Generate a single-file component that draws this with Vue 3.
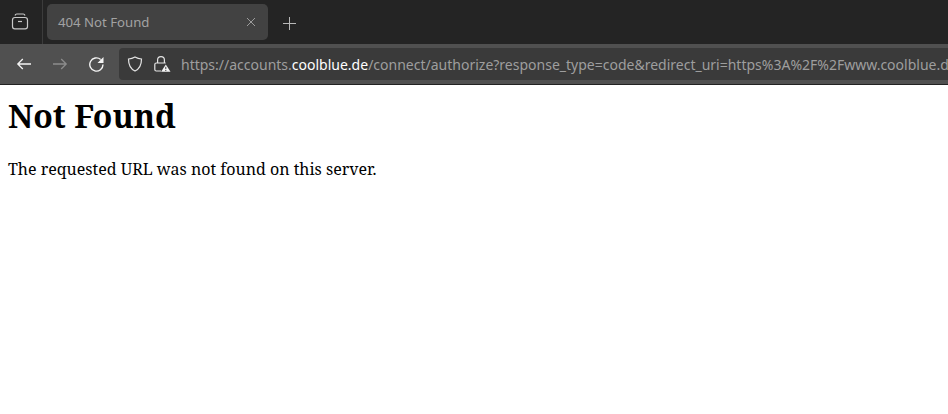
<script setup>
const url = {
  scheme: 'https://accounts.',
  host: 'coolblue.de',
  rest: '/connect/authorize?response_type=code&redirect_uri=https%3A%2F%2Fwww.coolblue.de%2Fauth%2Fcallback'
}
</script>

<template>
  <div class="page">
    <div class="tabbar">
      <div class="tab-manager">
        <svg width="18" height="18" viewBox="0 0 18 18" fill="none" stroke="#c8c8c8" stroke-width="1.200">
          <path d="M4 2.500c.3-1 .8-1.500 1.800-1.500h6.400c1 0 1.500.5 1.800 1.500" />
          <path d="M1.500 7c0-1.700.8-2.500 2.500-2.500h10c1.700 0 2.500.8 2.500 2.500v6.500c0 1.500-.7 2.300-2.300 2.300H3.800c-1.600 0-2.300-.8-2.300-2.300z" />
          <path d="M7 8.500h4" />
        </svg>
      </div>
      <div class="tab">
        <span class="tab-title">404 Not Found</span>
        <svg class="tab-close" width="10" height="10" viewBox="0 0 10 10" stroke="#9c9c9c" stroke-width="1">
          <path d="M1 1l8 8M9 1l-8 8" />
        </svg>
      </div>
      <svg class="new-tab" width="13" height="13" viewBox="0 0 13 13" stroke="#b8b8b8" stroke-width="1">
        <path d="M6.500 0v13M0 6.500h13" />
      </svg>
    </div>

    <div class="toolbar">
      <div class="nav">
        <svg width="16" height="14" viewBox="0 0 16 14" fill="none" stroke="#f4f4f4" stroke-width="1.300">
          <path d="M15 7H1.800M6.800 2L1.800 7l5 5" />
        </svg>
        <svg width="16" height="14" viewBox="0 0 16 14" fill="none" stroke="#8c8c8c" stroke-width="1.300">
          <path d="M1 7h13.200M9.200 2l5 5-5 5" />
        </svg>
        <svg width="16" height="16" viewBox="0 0 16 16" fill="none">
          <path d="M12.700 3.500A6.600 6.600 0 1 0 15 8.500" stroke="#f4f4f4" stroke-width="1.400" />
          <path d="M15.500 1v6H9.500z" fill="#f4f4f4" />
        </svg>
      </div>
      <div class="urlbar">
        <svg class="url-icon" width="16" height="16" viewBox="0 0 16 16" fill="none" stroke="#e4e4e4" stroke-width="1.200">
          <path d="M8 1c2.200 1.300 4.400 1.900 6.500 2 0 5.500-1.700 9.800-6.500 12C3.200 12.800 1.500 8.500 1.500 3 3.600 2.900 5.800 2.300 8 1z" />
        </svg>
        <svg class="url-icon lock" width="17" height="16" viewBox="0 0 17 16" fill="none">
          <path d="M3.600 7V4a3.400 3.400 0 0 1 6.800 0v3" stroke="#e4e4e4" stroke-width="1.200" />
          <path d="M7 15H2.300C1.300 15 .8 14.500 .8 13.500V8.500C.8 7.500 1.300 7 2.300 7h9.400" stroke="#e4e4e4" stroke-width="1.200" />
          <path d="M11.800 8.500L16.500 15.800H7.100z" fill="#f4f4f4" />
          <path d="M11.800 10.800v2.400M11.800 14v1" stroke="#3a3a3a" stroke-width="1" />
        </svg>
        <div class="url"><span>{{ url.scheme }}</span><span class="host">{{ url.host }}</span><span>{{ url.rest }}</span></div>
      </div>
    </div>

    <main class="content">
      <h1>Not Found</h1>
      <p>The requested URL was not found on this server.</p>
    </main>
  </div>
</template>

<style scoped>
.page {
  width: 948px;
  height: 414px;
  overflow: hidden;
  background: #fff;
}
.tabbar {
  height: 44px;
  display: flex;
  align-items: center;
  background: #242424;
  font-family: "Noto Sans", sans-serif;
}
.tab-manager {
  width: 40px;
  height: 44px;
  padding-right: 2px;
  display: flex;
  align-items: center;
  justify-content: center;
  border-right: 1px solid #3c3c3c;
}
.tab {
  width: 221px;
  height: 36px;
  margin-left: 4px;
  padding: 0 12px 0 11px;
  box-sizing: border-box;
  display: flex;
  align-items: center;
  justify-content: space-between;
  background: #424242;
  border-radius: 5px;
}
.tab-title {
  font-size: 13.2px;
  color: #a2a2a2;
}
.new-tab {
  margin: 2px 0 0 15px;
}
.toolbar {
  height: 40px;
  display: flex;
  align-items: center;
  background: #505050;
  border-bottom: 1px solid #222;
}
.nav {
  width: 119px;
  flex: none;
  padding-left: 16px;
  box-sizing: border-box;
  display: flex;
  align-items: center;
  gap: 20px;
}
.urlbar {
  flex: 1;
  min-width: 0;
  height: 32px;
  padding-left: 8px;
  display: flex;
  align-items: center;
  background: #3a3a3a;
  border-radius: 4px 0 0 4px;
}
.url-icon {
  flex: none;
}
.lock {
  margin-left: 11px;
}
.url {
  flex: 1;
  min-width: 0;
  margin-left: 10px;
  font-family: "Noto Sans", sans-serif;
  font-size: 14px;
  white-space: nowrap;
  overflow: hidden;
  color: #9e9e9e;
}
.host {
  color: #fff;
}
.content {
  padding: 0 8px;
  font-family: "Noto Serif", "DejaVu Serif", serif;
  color: #000;
}
h1 {
  margin: 11px 0 0;
  font-size: 32px;
  line-height: 40px;
  font-weight: 700;
}
p {
  margin: 22px 0 0;
  font-size: 16px;
  line-height: 22px;
}
</style>
